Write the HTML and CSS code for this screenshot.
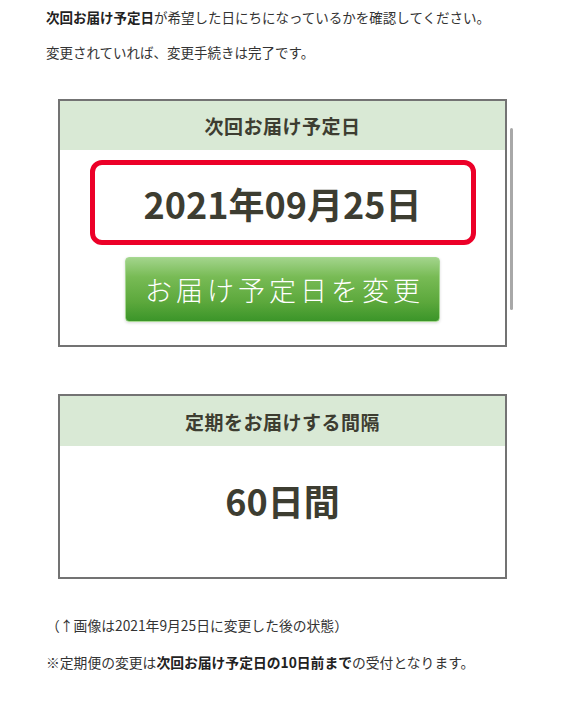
FILE: index.html
```html
<!DOCTYPE html>
<html lang="ja">
<head>
<meta charset="utf-8">
<link rel="stylesheet" href="styles.css">
</head>
<body>
<div class="content">
  <p class="line first"><strong>次回お届け予定日</strong>が希望した日にちになっているかを確認してください。</p>
  <p class="line second">変更されていれば、変更手続きは完了です。</p>

  <div class="card-wrap">
    <section class="card">
      <div class="card-head">次回お届け予定日</div>
      <div class="card-body">
        <div class="date-frame">2021年09月25日</div>
        <div class="btn">お届け予定日を変更</div>
      </div>
    </section>
    <div class="scrollbar"></div>
  </div>

  <section class="card card2">
    <div class="card-head">定期をお届けする間隔</div>
    <div class="card-body interval">60日間</div>
  </section>

  <p class="line note">（↑画像は2021年9月25日に変更した後の状態）</p>
  <p class="line note2">※定期便の変更は<strong>次回お届け予定日の10日前まで</strong>の受付となります。</p>
</div>
</body>
</html>
```

FILE: styles.css
```css
html, body {
  margin: 0;
  padding: 0;
  background: #ffffff;
}
body {
  font-family: "Noto Sans CJK JP", "Noto Sans", sans-serif;
  font-size: 13.5px;
  color: #333333;
}
.content {
  padding: 5px 0 0 46px;
  width: 480px;
}
.line {
  margin: 0;
  line-height: 24px;
  white-space: nowrap;
}
.line strong {
  font-weight: 700;
  color: #222;
}
.second {
  margin-top: 11px;
}
.card-wrap {
  position: relative;
  margin-top: 35px;
  width: 460px;
}
.card {
  margin-left: 12px;
  width: 445px;
  border: 2px solid #737373;
  background: #fff;
}
.card-head {
  height: 49px;
  background: #d9e9d5;
  color: #3d3d31;
  font-size: 19px;
  font-weight: 700;
  display: flex;
  align-items: center;
  justify-content: center;
  letter-spacing: 0.5px;
}
.card-body {
  display: flex;
  flex-direction: column;
  align-items: center;
  padding: 10px 0 23px;
}
.date-frame {
  box-sizing: border-box;
  width: 386px;
  height: 85px;
  border: 5px solid #ec0028;
  border-radius: 12px;
  display: flex;
  align-items: center;
  justify-content: center;
  font-size: 36px;
  font-weight: 700;
  color: #3d3d31;
}
.btn {
  box-sizing: border-box;
  margin-top: 12px;
  width: 315px;
  height: 65px;
  border: 1px solid #a6d891;
  border-radius: 4px;
  background: linear-gradient(to bottom, #a2d48b 0%, #78bb55 30%, #5ca83c 70%, #3b9529 100%);
  box-shadow: 0 1px 3px rgba(0,0,0,0.15);
  color: #ffffff;
  font-size: 27px;
  font-weight: 300;
  letter-spacing: 4px;
  display: flex;
  align-items: center;
  justify-content: center;
  padding-left: 4px;
}
.scrollbar {
  position: absolute;
  left: 464px;
  top: 29px;
  width: 3px;
  height: 182px;
  border-radius: 2px;
  background: #a8a8a8;
}
.card2 {
  margin-top: 47px;
}
.card2 .card-head {
  height: 50px;
}
.interval {
  height: 131px;
  padding: 0;
  justify-content: center;
  font-size: 36px;
  font-weight: 700;
  color: #3d3d31;
  box-sizing: border-box;
  padding-bottom: 24px;
}
.note {
  margin-top: 34px;
  font-size: 13.8px;
}
.note2 {
  margin-top: 13px;
  font-size: 13.8px;
}
```
